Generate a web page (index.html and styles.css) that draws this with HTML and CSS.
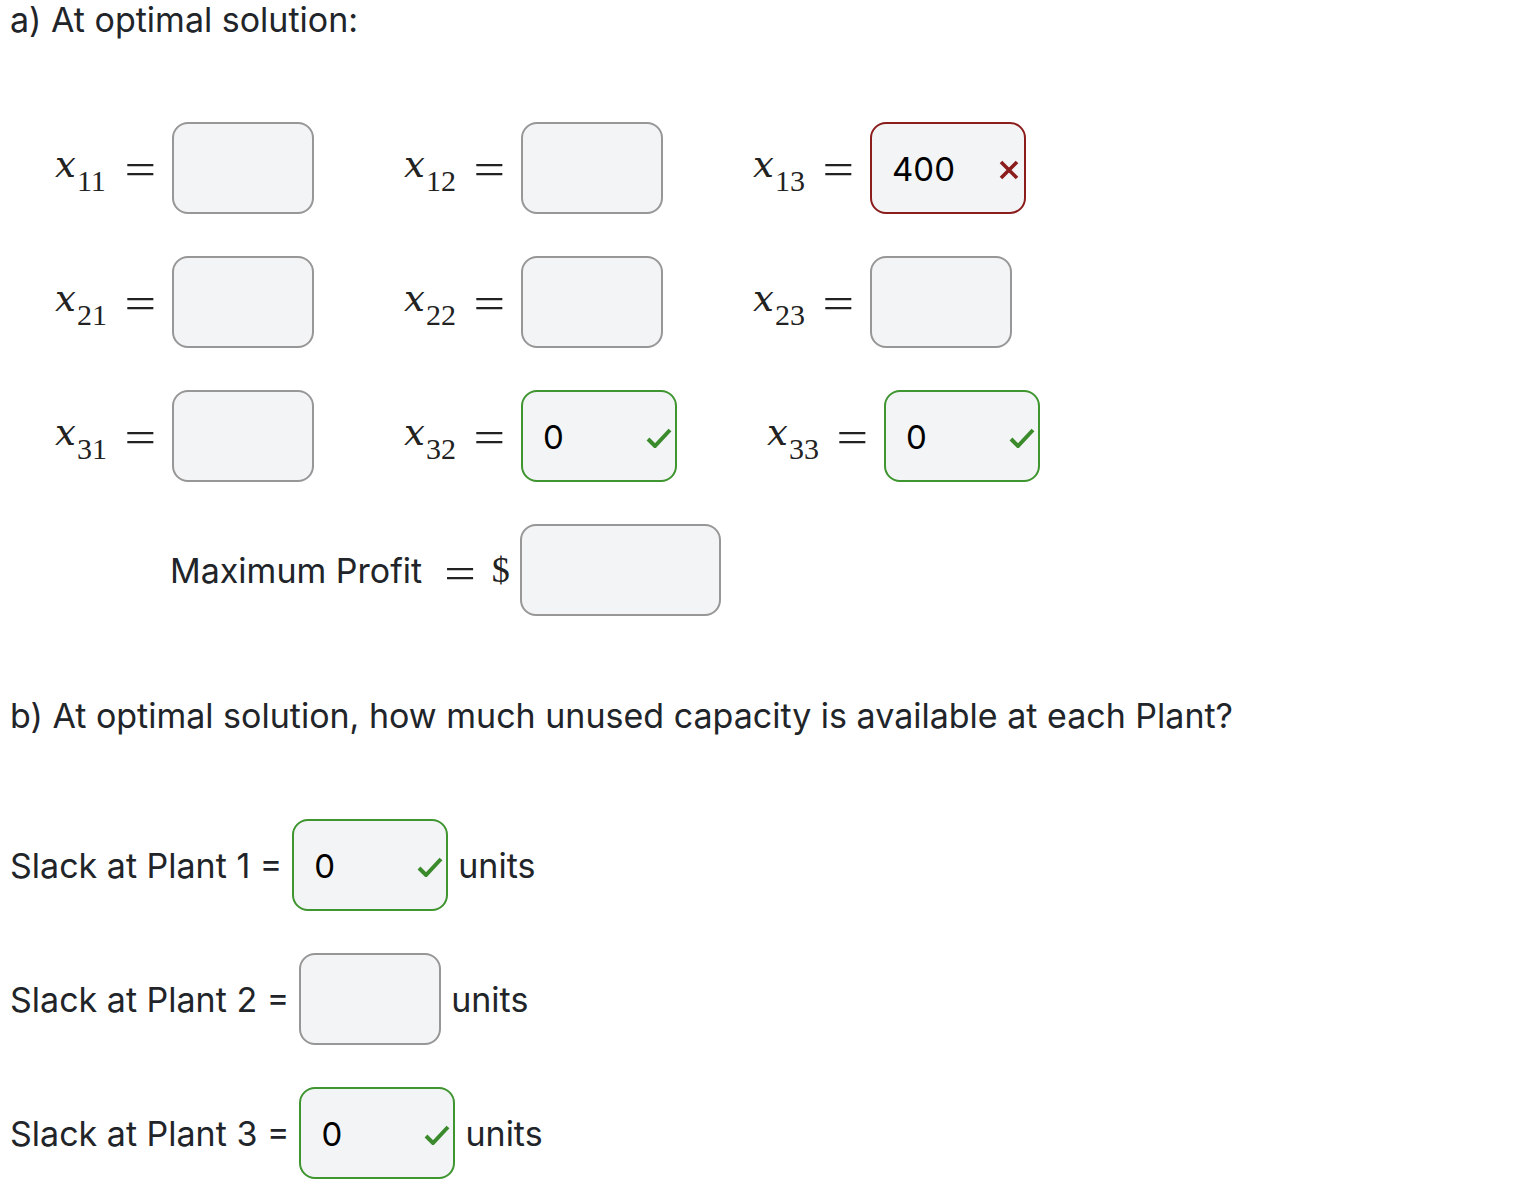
FILE: index.html
```html
<!DOCTYPE html>
<html lang="en">
<head>
<meta charset="utf-8">
<title>Optimal solution</title>
<link rel="stylesheet" href="styles.css">
</head>
<body>
<p class="heading heading-a">a) At optimal solution:</p>

<div class="matrix">
  <div class="mrow">
    <div class="cell"><span class="mlabel"><span class="var"><i>x</i><sub>11</sub></span><span class="eq">=</span></span><div class="field"></div></div>
    <div class="cell"><span class="mlabel"><span class="var"><i>x</i><sub>12</sub></span><span class="eq">=</span></span><div class="field"></div></div>
    <div class="cell"><span class="mlabel"><span class="var"><i>x</i><sub>13</sub></span><span class="eq">=</span></span><div class="field field-wrong"><span class="value">400</span><svg class="mark" width="20" height="20" viewBox="0 0 20 20"><path d="M2 2 L18 18 M18 2 L2 18" stroke="#8b1d1d" stroke-width="3.6" fill="none"/></svg></div></div>
  </div>
  <div class="mrow">
    <div class="cell"><span class="mlabel"><span class="var"><i>x</i><sub>21</sub></span><span class="eq">=</span></span><div class="field"></div></div>
    <div class="cell"><span class="mlabel"><span class="var"><i>x</i><sub>22</sub></span><span class="eq">=</span></span><div class="field"></div></div>
    <div class="cell"><span class="mlabel"><span class="var"><i>x</i><sub>23</sub></span><span class="eq">=</span></span><div class="field"></div></div>
  </div>
  <div class="mrow">
    <div class="cell"><span class="mlabel"><span class="var"><i>x</i><sub>31</sub></span><span class="eq">=</span></span><div class="field"></div></div>
    <div class="cell"><span class="mlabel"><span class="var"><i>x</i><sub>32</sub></span><span class="eq">=</span></span><div class="field field-right"><span class="value">0</span><svg class="mark" width="26" height="20" viewBox="0 0 26 20"><path d="M2 11 L9 18 L24 2" stroke="#3b8b2c" stroke-width="4" fill="none"/></svg></div></div>
    <div class="cell"><span class="mlabel"><span class="var"><i>x</i><sub>33</sub></span><span class="eq">=</span></span><div class="field field-right"><span class="value">0</span><svg class="mark" width="26" height="20" viewBox="0 0 26 20"><path d="M2 11 L9 18 L24 2" stroke="#3b8b2c" stroke-width="4" fill="none"/></svg></div></div>
  </div>
  <div class="profit-row">
    <span class="profit-text">Maximum Profit</span>
    <span class="eq profit-eq">=</span>
    <span class="dollar">$</span>
    <div class="field field-wide"></div>
  </div>
</div>

<p class="heading heading-b">b) At optimal solution, how much unused capacity is available at each Plant?</p>

<div class="slack">
  <div class="srow">
    <span class="slabel">Slack at Plant 1 =</span>
    <div class="field field-right"><span class="value">0</span><svg class="mark" width="26" height="20" viewBox="0 0 26 20"><path d="M2 11 L9 18 L24 2" stroke="#3b8b2c" stroke-width="4" fill="none"/></svg></div>
    <span class="units">units</span>
  </div>
  <div class="srow">
    <span class="slabel">Slack at Plant 2 =</span>
    <div class="field"></div>
    <span class="units">units</span>
  </div>
  <div class="srow">
    <span class="slabel">Slack at Plant 3 =</span>
    <div class="field field-right"><span class="value">0</span><svg class="mark" width="26" height="20" viewBox="0 0 26 20"><path d="M2 11 L9 18 L24 2" stroke="#3b8b2c" stroke-width="4" fill="none"/></svg></div>
    <span class="units">units</span>
  </div>
</div>
</body>
</html>
```

FILE: styles.css
```css
html, body {
  margin: 0;
  padding: 0;
  background: #ffffff;
}
body {
  padding: 0 10px;
  font-family: Inter, "Liberation Sans", Arial, sans-serif;
  font-size: 34px;
  color: #212529;
}
.heading {
  margin: 0;
  line-height: 40px;
}
.heading-a {
  margin-bottom: 82px;
}
.heading-b {
  margin-top: 80px;
  margin-bottom: 83px;
}
.matrix {
  display: flex;
  flex-direction: column;
  gap: 42px;
}
.mrow {
  display: flex;
  gap: 90px;
  padding-left: 45px;
}
.cell {
  display: flex;
  align-items: center;
  gap: 16px;
}
.mlabel {
  display: flex;
  align-items: center;
  justify-content: space-between;
  width: 101px;
  line-height: 1;
  font-family: "DejaVu Serif", "Liberation Serif", serif;
  color: #222;
}
.var {
  margin-bottom: 8px;
}
.var i {
  font-size: 37px;
  font-style: italic;
}
.var sub {
  font-family: "Liberation Serif", "Times New Roman", serif;
  font-size: 30px;
  vertical-align: -14px;
  line-height: 0;
  margin-left: 1px;
}
.eq {
  font-family: "Liberation Serif", "Times New Roman", serif;
  font-size: 56px;
  line-height: 1;
  transform: scaleY(0.8);
  color: #222;
}
.mlabel .eq {
  margin-top: 2px;
}
.field {
  box-sizing: border-box;
  width: 142px;
  height: 92px;
  border: 2px solid #979797;
  border-radius: 16px;
  background: #f3f4f6;
  display: flex;
  align-items: center;
  justify-content: space-between;
  padding: 0 3px 0 20px;
  flex-shrink: 0;
}
.field .value {
  font-size: 33px;
  color: #000;
  padding-top: 2px;
}
.field-wrong {
  width: 156px;
  border-color: #8b1d1d;
  padding-right: 5px;
}
.field-right {
  width: 156px;
  border-color: #3f952f;
}
.mark {
  display: block;
  margin-top: 4px;
}
.profit-row {
  display: flex;
  align-items: center;
  padding-left: 160px;
}
.profit-text {
  margin-right: 22px;
}
.profit-eq {
  padding-top: 6px;
  margin-right: 16px;
}
.dollar {
  font-family: "Liberation Serif", "Times New Roman", serif;
  font-size: 36px;
  color: #222;
  margin-right: 10px;
}
.field-wide {
  width: 201px;
}
.slack {
  display: flex;
  flex-direction: column;
  gap: 42px;
}
.srow {
  display: flex;
  align-items: center;
  gap: 10px;
}
```
